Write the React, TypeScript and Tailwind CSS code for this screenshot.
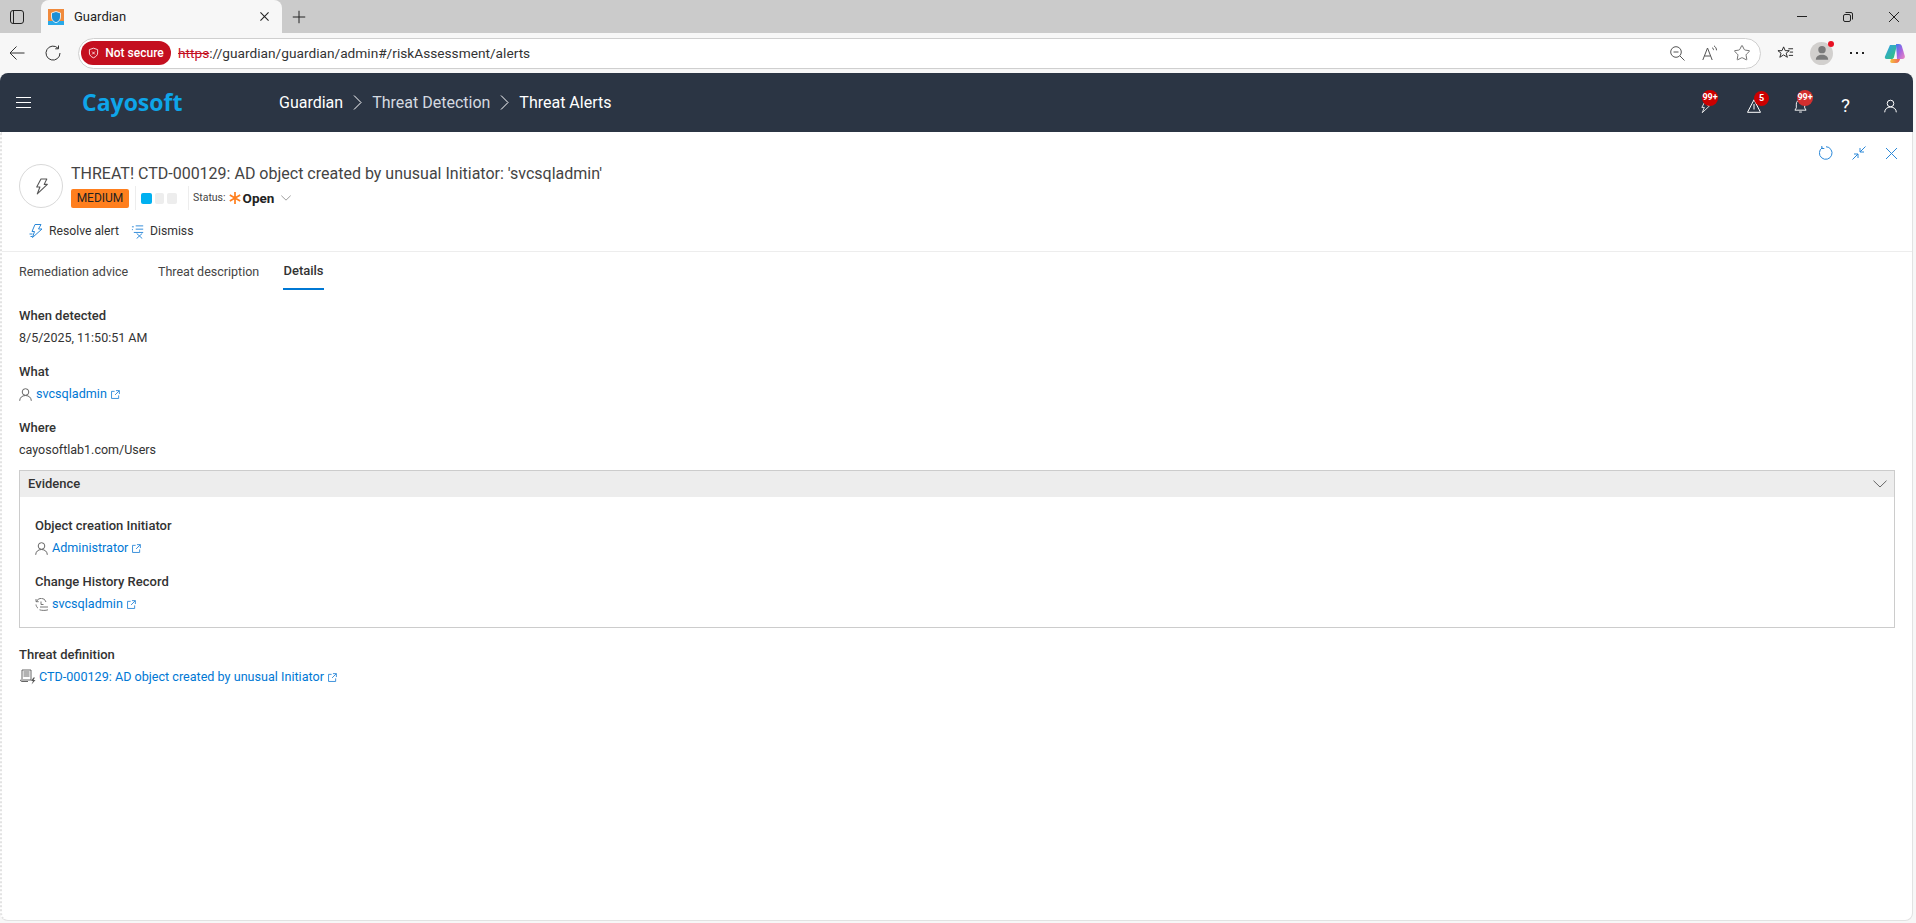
import { Plus, Star } from "lucide-react";

const FONT = "font-['Roboto','Open_Sans',sans-serif]";

const BoltIcon = ({ className }: { className?: string }) => (
  <svg viewBox="0 0 16 16" fill="none" stroke="currentColor" strokeWidth="1" className={className}>
    <path d="M7.500 1h5.500l-2.500 5h3L4 15 6.500 8.500H3.500z" strokeLinejoin="round" />
  </svg>
);

const UserIcon = ({ className, color }: { className?: string; color: string }) => (
  <svg viewBox="0 0 13 13" fill="none" stroke={color} strokeWidth="1" className={className}>
    <circle cx="6.500" cy="4" r="3.300" />
    <path d="M.7 12.800c0-3 2.300-5.300 5.800-5.300s5.800 2.300 5.800 5.300" />
  </svg>
);

const ExternalIcon = () => (
  <svg viewBox="0 0 10 10" fill="none" stroke="#2b88d8" strokeWidth="1" className="ml-[4px] mt-[2px] h-[9px] w-[9px] shrink-0">
    <path d="M4 1.500H.6v7.900h7.900V6M5.500.7h3.800v3.800M9.200.8 4.500 5.500" />
  </svg>
);

const HistoryIcon = () => (
  <svg viewBox="0 0 13 13" fill="none" stroke="#666" strokeWidth="0.9" className="h-[13px] w-[13px] shrink-0">
    <path d="M1.500 3.500A5 5 0 0 1 11 4M1 1v2.700h2.700M1 6.500c.2 1.500 .8 2.800 2 3.700M6 3.500v3h2.500M5 9h8M4.500 11.800c2.500.8 6 .8 8.500 0" />
  </svg>
);

const DefinitionIcon = () => (
  <svg viewBox="0 0 18 16" fill="none" stroke="#555" strokeWidth="0.9" className="h-[16px] w-[18px] shrink-0">
    <path d="M3 1h9v10H1.500M3 1v9M4.500 3h6M4.500 5h6M4.500 7h6M1.500 11c0 1 .6 1.500 1.500 1.500h6" />
    <path d="M14.500 8.500 12 12h2l-1.500 3.500 4-4.500h-2l1.500-2.500z" fill="#555" stroke="none" />
  </svg>
);

const CrumbChevron = () => (
  <svg viewBox="0 0 9 15" fill="none" stroke="#fff" strokeWidth="1" className="mx-[10px] h-[15px] w-[9px] shrink-0">
    <path d="M1 .5 8 7.500 1 14.500" />
  </svg>
);

const Chevron = ({ className, color }: { className: string; color: string }) => (
  <svg viewBox="0 0 14 8" fill="none" stroke={color} strokeWidth="1" className={className}>
    <path d="M.5.700 7 7 13.500.7" />
  </svg>
);

const Badge = ({ text, className }: { text: string; className: string }) => (
  <span className={`absolute flex items-center justify-center rounded-full text-[9px] font-bold leading-none text-white ${className}`}>
    {text}
  </span>
);

const Field = ({ label, children }: { label: string; children: React.ReactNode }) => (
  <div className="flex flex-col">
    <div className="flex h-[22px] items-center text-[13px] font-medium text-[#333]">{label}</div>
    <div className="flex h-[22px] items-center text-[12.5px] text-[#333]">{children}</div>
  </div>
);

const LinkText = ({ children }: { children: React.ReactNode }) => (
  <span className="flex items-center text-[12.6px] text-[#0078d4]">
    {children}
    <ExternalIcon />
  </span>
);

const BrowserChrome = () => (
  <div className="shrink-0">
    {/* Tab strip */}
    <div className="flex h-[33px] items-center bg-[#cbcbcb]">
      <div className="ml-[10px] flex h-[14px] w-[14px] rounded-[3px] border-[1.5px] border-[#222]">
        <div className="w-[3px] border-r border-[#222]" />
      </div>
      <div className="ml-[17px] flex h-[33px] w-[241px] items-center rounded-t-[8px] bg-[#f7f7f7] pl-[7px] pr-[13px]">
        <svg viewBox="0 0 16 16" className="h-[16px] w-[16px] shrink-0">
          <rect width="16" height="16" fill="#f08a3c" />
          <rect y="12" width="16" height="4" fill="#29a9e8" />
          <path d="M8 2.500 12.500 4v4c0 3-2 4.800-4.500 5.700C5.500 12.800 3.500 11 3.500 8V4z" fill="#1c8fd6" stroke="#fff" strokeWidth="0.8" />
        </svg>
        <span className={`ml-[10px] flex-1 text-[13px] text-[#222] ${FONT}`}>Guardian</span>
        <svg viewBox="0 0 10 10" fill="none" stroke="#222" strokeWidth="1.200" className="h-[9px] w-[9px]">
          <path d="M.5.500l9 9M9.500.500l-9 9" />
        </svg>
      </div>
      <Plus size={20} strokeWidth={1.200} className="ml-[7px] text-[#222]" />
      <div className="flex-1" />
      <div className="mr-[36px] h-px w-[10px] bg-[#222]" />
      <svg viewBox="0 0 10 10" fill="none" stroke="#222" strokeWidth="1" className="mr-[36px] h-[10px] w-[10px]">
        <rect x=".5" y="2.500" width="7" height="7" rx="1.500" />
        <path d="M2.500.5H8A1.500 1.500 0 0 1 9.500 2V7.500" />
      </svg>
      <svg viewBox="0 0 10 10" fill="none" stroke="#222" strokeWidth="1" className="mr-[17px] h-[10px] w-[10px]">
        <path d="M0 0l10 10M10 0 0 10" />
      </svg>
    </div>

    {/* Address bar */}
    <div className="flex h-[40px] items-center bg-[#f7f7f7]">
      <svg viewBox="0 0 16 16" fill="none" stroke="#333" strokeWidth="1" className="ml-[9px] h-[16px] w-[16px] shrink-0">
        <path d="M15.500 8H1M7.500 1.500 1 8l6.500 6.500" />
      </svg>
      <svg viewBox="0 0 16 16" fill="none" stroke="#333" strokeWidth="1" className="ml-[20px] h-[16px] w-[16px] shrink-0">
        <path d="M13 3.200A7 7 0 1 0 15 8M13.500.5v3.300h-3.300" />
      </svg>
      <div className="ml-[17px] flex h-[31px] w-[1683px] shrink-0 items-center rounded-full border border-[#cfcfcf] bg-white pl-[2px] pr-[9px]">
        <div className={`flex h-[24px] w-[90px] shrink-0 items-center justify-center gap-[6px] rounded-full bg-[#c40f1f] text-[12px] font-medium text-white ${FONT}`}>
          <svg viewBox="0 0 12 12" fill="none" stroke="#fff" strokeWidth="0.9" className="h-[12px] w-[11px]">
            <path d="M6 .8 10.500 2.300V6c0 2.500-2 4.200-4.500 5.200C3.500 10.200 1.500 8.500 1.500 6V2.300zM4.500 4.500l3 3M7.500 4.500l-3 3" />
          </svg>
          <span>Not secure</span>
        </div>
        <div className={`ml-[7px] flex-1 text-[13.7px] text-[#333] ${FONT}`}>
          <span className="text-[#c40f1f] line-through">https</span>://guardian/guardian/admin#/riskAssessment/alerts
        </div>
        <svg viewBox="0 0 15 15" fill="none" stroke="#555" strokeWidth="1" className="h-[15px] w-[15px]">
          <circle cx="6" cy="6" r="5.300" />
          <path d="M3.500 6h5M10 10l4.500 4.500" />
        </svg>
        <svg viewBox="0 0 16 16" fill="none" stroke="#555" strokeWidth="1" className="ml-[17px] h-[16px] w-[16px]">
          <path d="M.8 15 5.500 3l4.700 12M2.500 11h6M10 2.500c1 .7 1.500 1.500 1.500 2.600M12 .8c1.500 1.100 2.500 2.600 2.500 4.500" />
        </svg>
        <Star size={18} strokeWidth={1.100} className="ml-[15px] text-[#555]" />
      </div>
      <svg viewBox="0 0 18 18" fill="none" stroke="#222" strokeWidth="1" className="ml-[16px] h-[17px] w-[17px] shrink-0">
        <path d="M7 2 8.700 6H13l-3.300 2.700L11 13 7 10.500 3 13l1.300-4.300L1 6h4.300zM12 4h5M13.500 7.500H17M12.500 11H17" />
      </svg>
      <div className="relative ml-[16px] flex h-[23px] w-[23px] shrink-0 items-center justify-center rounded-full bg-[#d2d0ce]">
        <svg viewBox="0 0 16 16" className="h-[18px] w-[18px]" fill="#7a7a7a">
          <circle cx="8" cy="5" r="3.300" />
          <path d="M2.500 14c0-3 2.500-4.500 5.500-4.500s5.500 1.500 5.500 4.500z" />
        </svg>
        <span className="absolute right-[-1px] top-[-1px] h-[6px] w-[6px] rounded-full bg-[#e81123]" />
      </div>
      <div className="ml-[17px] flex shrink-0 gap-[4px]">
        <span className="h-[2px] w-[2px] bg-[#222]" />
        <span className="h-[2px] w-[2px] bg-[#222]" />
        <span className="h-[2px] w-[2px] bg-[#222]" />
      </div>
      <svg viewBox="0 0 22 22" className="ml-[20px] h-[22px] w-[22px] shrink-0">
        <defs>
          <linearGradient id="cpA" x1="0" y1="0" x2="1" y2="1">
            <stop offset="0" stopColor="#2f9cf0" />
            <stop offset="1" stopColor="#34c76f" />
          </linearGradient>
          <linearGradient id="cpB" x1="0" y1="0" x2="1" y2="1">
            <stop offset="0" stopColor="#3a7df0" />
            <stop offset="0.5" stopColor="#a565e0" />
            <stop offset="1" stopColor="#f08ac0" />
          </linearGradient>
          <linearGradient id="cpC" x1="0" y1="0" x2="1" y2="0">
            <stop offset="0" stopColor="#f6c23c" />
            <stop offset="1" stopColor="#f0605a" />
          </linearGradient>
        </defs>
        <path d="M6 3h7l-3 12c-.4 1.400-1.300 2-2.500 2H2.500C1 17 .5 16 1 14.500z" fill="url(#cpA)" />
        <path d="M12 2h3c1.500 0 2.400.8 2.800 2l3 10c.4 1.500-.4 3-2.300 3H13z" fill="url(#cpB)" />
        <path d="M7 17h9c-.5 2.500-1.800 4-4 4H8c-1.500 0-2.200-1-1.500-2.500z" fill="url(#cpC)" />
      </svg>
    </div>
  </div>
);

const AppHeader = () => (
  <div className="flex h-[59px] shrink-0 items-center rounded-t-[8px] bg-[#2b3544] text-white">
    <svg viewBox="0 0 15 11" fill="none" stroke="#fff" strokeWidth="1" className="ml-[16px] h-[11px] w-[15px] shrink-0">
      <path d="M0 .5h15M0 5.500h15M0 10.500h15" />
    </svg>
    <span className="ml-[51px] w-[197px] font-['Open_Sans',sans-serif] text-[23px] font-bold leading-none text-[#0ea5e9]">Cayosoft</span>
    <div className="flex items-center text-[16px]">
      <span>Guardian</span>
      <CrumbChevron />
      <span className="text-[#d5dae0]">Threat Detection</span>
      <CrumbChevron />
      <span>Threat Alerts</span>
    </div>
    <div className="flex-1" />
    <div className="relative mr-[35px] h-[14px] w-[13px] translate-y-[4px]">
      <BoltIcon className="h-[14px] w-[13px] text-white" />
      <Badge text="99+" className="left-[3px] top-[-10px] h-[16px] w-[16px] bg-[#cc0000]" />
    </div>
    <div className="relative mr-[33px] h-[14px] w-[14px] translate-y-[3px]">
      <svg viewBox="0 0 14 14" fill="none" stroke="#fff" strokeWidth="1" className="h-[14px] w-[14px]">
        <path d="M7 .8 13.500 13.300H.5zM7 5v5.500" />
      </svg>
      <Badge text="5" className="left-[7px] top-[-8px] h-[15px] w-[15px] bg-[#cc0000]" />
    </div>
    <div className="relative mr-[34px] h-[14px] w-[13px] translate-y-[3px]">
      <svg viewBox="0 0 14 14" fill="none" stroke="#fff" strokeWidth="1" className="h-[14px] w-[13px]">
        <path d="M7 .5c-3 0-4.500 2-4.500 4.500v4L1 11.500h12L11.500 9V5C11.500 2.500 10 .5 7 .5zM5.500 13.500h3" />
      </svg>
      <Badge text="99+" className="left-[3px] top-[-9px] h-[16px] w-[16px] bg-[#d32f2f]" />
    </div>
    <span className="mr-[35px] w-[8px] translate-y-[3px] text-center text-[19px] leading-none">?</span>
    <UserIcon color="#fff" className="mr-[16px] h-[14px] w-[13px] translate-y-[3px]" />
  </div>
);

const AlertHeader = () => (
  <div className="relative h-[120px] shrink-0 border-b border-[#ededed]">
    <div className="absolute right-[15px] top-[14px] flex items-center text-[#2b88d8]">
      <svg viewBox="0 0 14 14" fill="none" stroke="currentColor" strokeWidth="1" className="h-[14px] w-[14px]">
        <path d="M3.300 1.700A6.300 6.300 0 1 0 7 .7M2.800 0v2.500h2.500" />
      </svg>
      <svg viewBox="0 0 14 14" fill="none" stroke="currentColor" strokeWidth="1" className="ml-[19px] h-[14px] w-[14px]">
        <path d="M8 6 13.500.5M8 2V6h4M6 8 .5 13.500M6 12V8H2" />
      </svg>
      <svg viewBox="0 0 11 11" fill="none" stroke="currentColor" strokeWidth="1" className="ml-[20px] h-[11px] w-[11px]">
        <path d="M0 0l11 11M11 0 0 11" />
      </svg>
    </div>
    <div className="flex pl-[17px] pt-[32px]">
      <div className="flex h-[44px] w-[44px] shrink-0 items-center justify-center rounded-full border border-[#d9d9d9]">
        <BoltIcon className="h-[17px] w-[17px] text-[#555]" />
      </div>
      <div className="ml-[8px] flex flex-col">
        <div className="flex h-[20px] items-center text-[16px] leading-none text-[#444]">
          THREAT! CTD-000129: AD object created by unusual Initiator: 'svcsqladmin'
        </div>
        <div className="mt-[2px] flex h-[24px] items-center">
          <span className="flex h-[19px] w-[58px] items-center justify-center rounded-[2px] bg-[#ff7f1e] text-[12px] text-[#222]">MEDIUM</span>
          <div className="ml-[6px] h-[24px] border-l border-[#ededed]" />
          <div className="ml-[5px] flex gap-[3px]">
            <span className="h-[11px] w-[11px] rounded-[2px] bg-[#00b0f0]" />
            <span className="h-[11px] w-[9px] rounded-[2px] bg-[#ededed]" />
            <span className="h-[11px] w-[10px] rounded-[2px] bg-[#ededed]" />
          </div>
          <div className="ml-[11px] h-[24px] border-l border-[#ededed]" />
          <span className="ml-[4px] text-[10.5px] text-[#444]">Status:</span>
          <svg viewBox="0 0 12 12" stroke="#ff7f1e" strokeWidth="1.700" className="ml-[3px] h-[12px] w-[12px] shrink-0">
            <path d="M6 0v12M.8 3l10.400 6M11.200 3 .8 9" />
          </svg>
          <span className="ml-[2px] text-[13.5px] font-bold text-[#222]">Open</span>
          <Chevron color="#777" className="ml-[7px] h-[6px] w-[10px]" />
        </div>
      </div>
    </div>
    <div className="mt-[12px] flex items-center pl-[27px] text-[12.2px] text-[#333]">
      <svg viewBox="0 0 14 14" fill="none" stroke="#2b88d8" strokeWidth="1" className="h-[14px] w-[14px]">
        <path d="M6 .5h6L9.500 5H13L3.500 13.500 5.500 7.500H3zM.5 10h3M1.500 12.500h2" />
      </svg>
      <span className="ml-[6px]">Resolve alert</span>
      <svg viewBox="0 0 16 16" fill="none" stroke="#2b88d8" strokeWidth="1" className="ml-[12px] h-[15px] w-[15px]">
        <path d="M1 3h2M1 6h1M5 2h8M5 5.500h8M3 9h10M6 10l6 5.500M12 10l-6 5.500" />
      </svg>
      <span className="ml-[4px]">Dismiss</span>
    </div>
  </div>
);

const Tabs = () => (
  <div className="flex h-[38px] items-start pl-[17px] text-[12.5px] text-[#444]">
    <div className="flex h-[38px] w-[139px] items-center pt-[2px]">Remediation advice</div>
    <div className="flex h-[38px] w-[125px] items-center pt-[2px]">Threat description</div>
    <div className="flex h-[38px] w-[41px] items-center justify-center border-b-2 border-[#0078d4] pt-[2px] text-[13px] font-medium text-[#333]">Details</div>
  </div>
);

export default function App() {
  return (
    <div className={`flex h-[923px] w-[1916px] flex-col overflow-hidden bg-[#f7f7f7] ${FONT}`}>
      <BrowserChrome />
      <div className="flex flex-1 flex-col pb-[2px] pr-[3px]">
        <AppHeader />
        <div className="flex-1 rounded-b-[8px] border-b border-l-2 border-r border-[#e2e2e2] bg-white [border-left-style:dotted]">
          <AlertHeader />
          <Tabs />
          <div className="flex flex-col gap-[12px] pl-[17px] pr-[17px] pt-[15px]">
            <Field label="When detected">8/5/2025, 11:50:51 AM</Field>
            <Field label="What">
              <UserIcon color="#666" className="mr-[4px] h-[13px] w-[13px] shrink-0" />
              <LinkText>svcsqladmin</LinkText>
            </Field>
            <Field label="Where">cayosoftlab1.com/Users</Field>
            <div className="-mt-[3px] mb-[4px] border border-[#cccccc]">
              <div className="flex h-[26px] items-center justify-between bg-[#ededed] pl-[8px] pr-[7px] text-[13px] font-medium text-[#333]">
                <span>Evidence</span>
                <Chevron color="#666" className="h-[8px] w-[14px]" />
              </div>
              <div className="flex flex-col gap-[12px] pb-[12px] pl-[15px] pt-[18px]">
                <Field label="Object creation Initiator">
                  <UserIcon color="#666" className="mr-[4px] h-[13px] w-[13px] shrink-0" />
                  <LinkText>Administrator</LinkText>
                </Field>
                <Field label="Change History Record">
                  <span className="mr-[4px]"><HistoryIcon /></span>
                  <LinkText>svcsqladmin</LinkText>
                </Field>
              </div>
            </div>
            <Field label="Threat definition">
              <DefinitionIcon />
              <span className="ml-[2px]" />
              <LinkText>CTD-000129: AD object created by unusual Initiator</LinkText>
            </Field>
          </div>
        </div>
      </div>
    </div>
  );
}
